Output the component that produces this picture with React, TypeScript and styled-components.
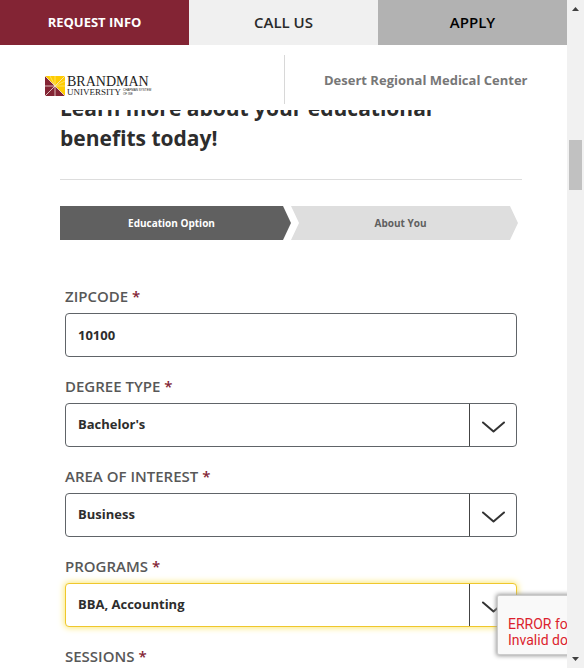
import React, { useState } from "react";
import styled, { createGlobalStyle } from "styled-components";

const GlobalStyle = createGlobalStyle`
  * { box-sizing: border-box; }
  body {
    margin: 0;
    background: #fff;
    color: #2d2d2d;
    font-family: "Open Sans", "Noto Sans", sans-serif;
    overflow: hidden;
  }
`;

const Screen = styled.div`
  display: grid;
  grid-template-columns: minmax(0, 1fr) 17px;
  height: 100vh;
`;

const Pane = styled.div`
  position: relative;
  overflow: hidden;
`;

const Header = styled.header`
  position: relative;
  z-index: 1;
  background: #fff;
`;

const Actions = styled.nav`
  display: grid;
  grid-template-columns: repeat(3, 1fr);
  height: 45px;
`;

type Tone = "brand" | "light" | "grey";
const tones: Record<Tone, string> = {
  brand: "background: #832434; color: #fff; font-size: 13px; font-weight: 700;",
  light: "background: #f0f0f0; color: #2a2a2a; font-size: 15px; font-weight: 600;",
  grey: "background: #b2b2b2; color: #000; font-size: 15px; font-weight: 600;",
};

const Action = styled.a<{ $tone: Tone }>`
  display: flex;
  align-items: center;
  justify-content: center;
  padding-bottom: 2px;
  text-decoration: none;
  ${(p) => tones[p.$tone]}
`;

const BrandBar = styled.div`
  display: grid;
  grid-template-columns: 1fr 1fr;
  height: 65px;
  padding: 10px 0 6px;
`;

const LogoCell = styled.div`
  display: flex;
  align-items: center;
  padding: 14px 0 0 45px;
`;

const PartnerCell = styled.div`
  display: flex;
  align-items: center;
  justify-content: center;
  border-left: 1px solid #d8d8d8;
  color: #777;
  font-size: 13px;
  font-weight: 700;
`;

const LogoLink = styled.a`
  display: flex;
  gap: 2px;
  color: #222;
  text-decoration: none;
  font-family: "Liberation Serif", serif;
`;

const LogoWords = styled.span`
  display: flex;
  flex-direction: column;
`;

const LogoName = styled.span`
  font-size: 14px;
  line-height: 12px;
`;

const LogoSecond = styled.span`
  display: flex;
  gap: 2px;
  font-size: 9px;
  line-height: 9px;
`;

const LogoSmall = styled.span`
  font-family: "Liberation Sans", sans-serif;
  font-size: 3px;
  line-height: 4px;
`;

const Main = styled.main`
  margin-top: -17px;
  padding: 0 45px 0 60px;
`;

const Title = styled.h1`
  margin: 0;
  padding-bottom: 26px;
  border-bottom: 1px solid #ddd;
  font-size: 21px;
  line-height: 30px;
  font-weight: 700;
`;

const Steps = styled.ol`
  display: grid;
  grid-template-columns: 231px 1fr;
  margin: 26px 4px 0 0;
  padding: 0;
  list-style: none;
`;

const Step = styled.li<{ $active?: boolean }>`
  display: flex;
  align-items: center;
  justify-content: center;
  height: 34px;
  padding-right: 8px;
  background: ${(p) => (p.$active ? "#606060" : "#dedede")};
  color: ${(p) => (p.$active ? "#fff" : "#606060")};
  font-size: 10px;
  font-weight: 700;
  clip-path: ${(p) =>
    p.$active
      ? "polygon(0 0, calc(100% - 8px) 0, 100% 50%, calc(100% - 8px) 100%, 0 100%)"
      : "polygon(0 0, calc(100% - 8px) 0, 100% 50%, calc(100% - 8px) 100%, 0 100%, 8px 50%)"};
`;

const Form = styled.form`
  display: flex;
  flex-direction: column;
  gap: 19px;
  padding: 46px 5px 0;
`;

const Field = styled.div`
  display: flex;
  flex-direction: column;
  gap: 7px;
`;

const Label = styled.label`
  color: #585858;
  font-size: 15px;
  line-height: 20px;
  font-weight: 600;
`;

const Required = styled.span`
  color: #832434;
`;

const control = `
  width: 100%;
  height: 44px;
  padding: 0 12px;
  border: 1px solid #606468;
  border-radius: 4px;
  outline: none;
  background: #fff;
  color: #2d2d2d;
  font-family: inherit;
  font-size: 13px;
  font-weight: 700;
`;

const TextInput = styled.input`
  ${control}
`;

const SelectBox = styled.div`
  display: grid;
  > * { grid-area: 1 / 1; }
`;

const Select = styled.select<{ $highlight?: boolean }>`
  ${control}
  appearance: none;
  padding-bottom: 2px;
  ${(p) => p.$highlight && "border-color: #efc72c; box-shadow: 0 0 6px 1px #fbe878;"}
`;

const Arrow = styled.span`
  display: flex;
  align-items: center;
  justify-content: center;
  justify-self: end;
  width: 47px;
  margin: 1px;
  padding-top: 3px;
  border-left: 1px solid #444;
  pointer-events: none;
`;

const ErrorBox = styled.div`
  position: absolute;
  right: -186px;
  bottom: 13px;
  width: 256px;
  padding: 20px 10px 6px;
  border: 1px solid #ccc;
  border-radius: 2px;
  background: #f9f9f9;
  box-shadow: 0 0 4px 1px #999;
  color: #dc1f2e;
  font: 14px/16px Roboto, sans-serif;
`;

const Scrollbar = styled.div`
  display: flex;
  flex-direction: column;
  align-items: center;
  padding: 7px 0;
  background: #f1f1f1;
`;

const Thumb = styled.div`
  width: 13px;
  height: 50px;
  margin: 129px 0 auto;
  background: #c1c1c1;
`;

function LogoMark() {
  return (
    <svg width="20" height="20" viewBox="0 0 20 20" aria-hidden="true">
      <path d="M0 0H20V20H0Z" fill="#832434" />
      <path d="M0 0H20V20L10 10Z" fill="#fc0" />
      <path
        d="M0 0L20 20M0 20L20 0M10 10V20M0 10H10"
        stroke="#f3e3dc"
        strokeWidth="0.8"
      />
      <path d="M10 10L5 0M10 10L20 5M10 10V0M10 10H20" stroke="#fff0a0" strokeWidth="0.6" />
    </svg>
  );
}

function Chevron() {
  return (
    <svg width="24" height="12" viewBox="0 0 24 12" aria-hidden="true">
      <path d="M2 1.5L12.5 10.5L23 1.5" fill="none" stroke="#333" strokeWidth="2" strokeLinecap="round" strokeLinejoin="round" />
    </svg>
  );
}

function ScrollArrow({ down = false }: { down?: boolean }) {
  return (
    <svg width="7" height="4" viewBox="0 0 7 4" aria-hidden="true">
      <path d={down ? "M0 0H7L3.5 4Z" : "M0 4H7L3.5 0Z"} fill="#404040" />
    </svg>
  );
}

interface SelectFieldProps {
  id: string;
  label: string;
  options: string[];
  highlight?: boolean;
}

function SelectField({ id, label, options, highlight }: SelectFieldProps) {
  return (
    <Field>
      <Label htmlFor={id}>
        {label} <Required>*</Required>
      </Label>
      <SelectBox>
        <Select id={id} $highlight={highlight}>
          {options.map((o) => (
            <option key={o}>{o}</option>
          ))}
        </Select>
        <Arrow>
          <Chevron />
        </Arrow>
      </SelectBox>
    </Field>
  );
}

export default function App() {
  const [zip, setZip] = useState("10100");
  return (
    <Screen>
      <GlobalStyle />
      <Pane>
        <Header>
          <Actions>
            <Action href="#request" $tone="brand">REQUEST INFO</Action>
            <Action href="#call" $tone="light">CALL US</Action>
            <Action href="#apply" $tone="grey">APPLY</Action>
          </Actions>
          <BrandBar>
            <LogoCell>
              <LogoLink href="#home">
                <LogoMark />
                <LogoWords>
                  <LogoName>BRANDMAN</LogoName>
                  <LogoSecond>
                    UNIVERSITY
                    <LogoSmall>CHAPMAN SYSTEM<br />OF ISE</LogoSmall>
                  </LogoSecond>
                </LogoWords>
              </LogoLink>
            </LogoCell>
            <PartnerCell>Desert Regional Medical Center</PartnerCell>
          </BrandBar>
        </Header>
        <Main>
          <Title>Learn more about your educational benefits today!</Title>
          <Steps>
            <Step $active>Education Option</Step>
            <Step>About You</Step>
          </Steps>
          <Form id="request">
            <Field>
              <Label htmlFor="zip">
                ZIPCODE <Required>*</Required>
              </Label>
              <TextInput id="zip" value={zip} onChange={(e) => setZip(e.target.value)} />
            </Field>
            <SelectField id="degree" label="DEGREE TYPE" options={["Bachelor's"]} />
            <SelectField id="area" label="AREA OF INTEREST" options={["Business"]} />
            <SelectField id="programs" label="PROGRAMS" options={["BBA, Accounting"]} highlight />
            <SelectField id="sessions" label="SESSIONS" options={[""]} />
          </Form>
        </Main>
        <ErrorBox role="alert">
          ERROR for site owner:
          <br />
          Invalid domain for site key
        </ErrorBox>
      </Pane>
      <Scrollbar aria-hidden="true">
        <ScrollArrow />
        <Thumb />
        <ScrollArrow down />
      </Scrollbar>
    </Screen>
  );
}
